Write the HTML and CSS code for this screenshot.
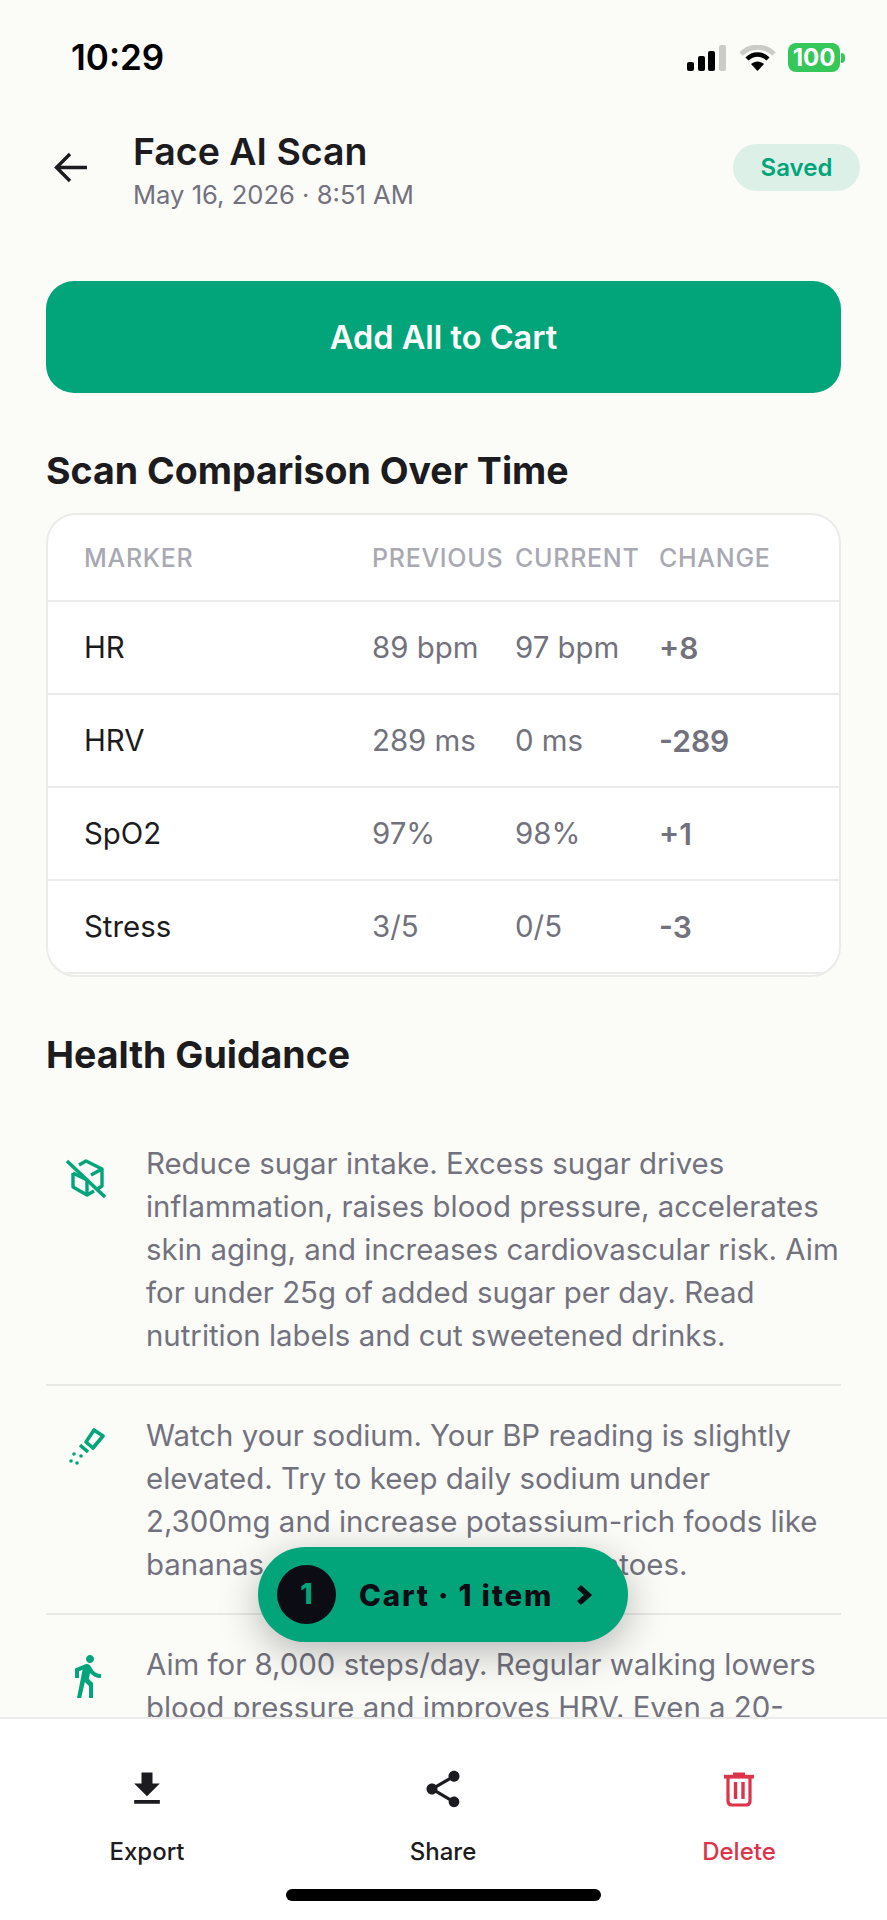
FILE: index.html
```html
<!DOCTYPE html>
<html>
<head>
    <title>Face AI Scan</title>
    <link rel="stylesheet" href="styles.css">
</head>
<body>
    <div class="screen">
        <div class="status_bar">
            <span class="time">10:29</span>
            <div class="status_icons">
                <svg class="signal" width="39" height="26" viewBox="0 0 39 26">
                    <rect x="0" y="17" width="7" height="9" rx="2" fill="#000"/>
                    <rect x="11" y="11" width="7" height="15" rx="2" fill="#000"/>
                    <rect x="21" y="6" width="7" height="20" rx="2" fill="#000"/>
                    <rect x="32" y="0" width="7" height="26" rx="2" fill="#cbccc8"/>
                </svg>
                <svg class="wifi" width="37" height="26" viewBox="0 0 37 26">
                    <path d="M2 9 C11 0 26 0 35 9" fill="none" stroke="#cbccc8" stroke-width="5"/>
                    <path d="M8 14 C14 8 23 8 29 14" fill="none" stroke="#000" stroke-width="4.5"/>
                    <path d="M12 19 L18.500 26 L25 19 C21 15.500 16 15.500 12 19 Z" fill="#000"/>
                </svg>
                <div class="battery"><span>100</span></div>
                <div class="battery_nub"></div>
            </div>
        </div>

        <div class="content">
            <div class="header">
                <svg class="back" width="34" height="31" viewBox="0 0 34 31">
                    <path d="M33 15.500 H3 M16 2 L2.500 15.500 L16 29" fill="none" stroke="#1b1b20" stroke-width="3.400"/>
                </svg>
                <div class="header_text">
                    <div class="title">Face AI Scan</div>
                    <div class="date">May 16, 2026 · 8:51 AM</div>
                </div>
                <span class="saved">Saved</span>
            </div>

            <button class="add_button">Add All to Cart</button>

            <h2 class="section_title">Scan Comparison Over Time</h2>
            <div class="compare_table">
                <div class="compare_row head">
                    <span>MARKER</span><span>PREVIOUS</span><span>CURRENT</span><span>CHANGE</span>
                </div>
                <div class="compare_row">
                    <span class="marker">HR</span><span>89 bpm</span><span>97 bpm</span><span class="change">+8</span>
                </div>
                <div class="compare_row">
                    <span class="marker">HRV</span><span>289 ms</span><span>0 ms</span><span class="change">-289</span>
                </div>
                <div class="compare_row">
                    <span class="marker">SpO2</span><span>97%</span><span>98%</span><span class="change">+1</span>
                </div>
                <div class="compare_row">
                    <span class="marker">Stress</span><span>3/5</span><span>0/5</span><span class="change">-3</span>
                </div>
            </div>

            <h2 class="section_title guidance_title">Health Guidance</h2>
            <div class="guidance">
                <div class="guide_item">
                    <div class="guide_icon">
                        <svg width="52" height="56" viewBox="0 0 52 56" fill="none" stroke="#02a57a" stroke-width="3.400" stroke-linejoin="round">
                            <path d="M19 15 L26 11 L42 19 V36 L36 40 M42 19 L31 25 M13 23 V37 L27 45 L34 41 M13 23 L27 30 V45"/>
                            <path d="M7 11 L45 47" stroke-width="3.600"/>
                        </svg>
                    </div>
                    <p>Reduce sugar intake. Excess sugar drives inflammation, raises blood pressure, accelerates skin aging, and increases cardiovascular risk. Aim for under 25g of added sugar per day. Read nutrition labels and cut sweetened drinks.</p>
                </div>
                <div class="guide_item">
                    <div class="guide_icon">
                        <svg width="52" height="50" viewBox="0 0 52 50" fill="none" stroke="#02a57a" stroke-width="3.600" stroke-linejoin="round">
                            <path d="M26 20 L34 8 L43 14 L33 26 Z"/>
                            <path d="M20 23 L28 30"/>
                            <g fill="#02a57a" stroke="none">
                                <circle cx="14" cy="32" r="1.800"/><circle cx="21" cy="34" r="1.800"/><circle cx="11" cy="39" r="1.800"/><circle cx="17" cy="41" r="1.800"/>
                            </g>
                        </svg>
                    </div>
                    <p>Watch your sodium. Your BP reading is slightly elevated. Try to keep daily sodium under 2,300mg and increase potassium-rich foods like bananas, spinach, and sweet potatoes.</p>
                </div>
                <div class="guide_item">
                    <div class="guide_icon walk">
                        <svg width="48" height="48" viewBox="0 0 24 24" fill="#02a57a">
                            <path d="M13.500 5.500c1.100 0 2-.9 2-2s-.9-2-2-2-2 .9-2 2 .9 2 2 2zM9.800 8.900L7 23h2.100l1.800-8 2.100 2v6h2v-7.500l-2.100-2 .6-3C14.800 12 16.800 13 19 13v-2c-1.900 0-3.500-1-4.300-2.400l-1-1.600c-.4-.6-1-1-1.700-1-.3 0-.5.1-.8.1L6 8.300V13h2V9.600l1.800-.7"/>
                        </svg>
                    </div>
                    <p>Aim for 8,000 steps/day. Regular walking lowers blood pressure and improves HRV. Even a 20-</p>
                </div>
            </div>
        </div>

        <div class="cart_pill">
            <span class="cart_count">1</span>
            <span class="cart_label">Cart · 1 item</span>
            <svg width="17" height="20" viewBox="0 0 17 20">
                <path d="M3 2 L12 10 L3 18" fill="none" stroke="#0b0c14" stroke-width="5.500"/>
            </svg>
        </div>

        <div class="bottom_bar">
            <div class="actions">
                <div class="action">
                    <svg width="44" height="44" viewBox="0 0 24 24" fill="#1b1b20">
                        <path d="M19 9h-4V3H9v6H5l7 7 7-7zM5 18v2h14v-2H5z"/>
                    </svg>
                    <span>Export</span>
                </div>
                <div class="action">
                    <svg width="44" height="44" viewBox="0 0 24 24" fill="#1b1b20">
                        <path d="M18 16.080c-.76 0-1.440.3-1.960.77L8.910 12.700c.05-.23.09-.46.09-.7s-.04-.47-.09-.7l7.050-4.110c.54.5 1.250.81 2.040.81 1.660 0 3-1.340 3-3s-1.340-3-3-3-3 1.340-3 3c0 .24.04.47.09.7L8.040 9.810C7.500 9.310 6.790 9 6 9c-1.660 0-3 1.340-3 3s1.340 3 3 3c.79 0 1.500-.31 2.040-.81l7.120 4.160c-.05.21-.08.43-.08.65 0 1.610 1.310 2.920 2.920 2.920 1.610 0 2.920-1.310 2.920-2.920s-1.310-2.920-2.920-2.920z"/>
                    </svg>
                    <span>Share</span>
                </div>
                <div class="action delete">
                    <svg width="44" height="44" viewBox="2 4 44 44" fill="none" stroke="#dc3449" stroke-width="3.200">
                        <path d="M9 13.700 H39" stroke-width="3.800"/>
                        <path d="M18 11 H30" stroke-width="3"/>
                        <path d="M13 15 V38 Q13 42 17 42 H31 Q35 42 35 38 V15"/>
                        <path d="M20.500 19 V36 M28 19 V36" stroke-width="3.400"/>
                    </svg>
                    <span>Delete</span>
                </div>
            </div>
            <div class="home_bar"></div>
        </div>
    </div>
</body>
</html>
```

FILE: styles.css
```css
* {
    box-sizing: border-box;
}
html, body {
    margin: 0;
    padding: 0;
}
body {
    font-family: Inter, "Liberation Sans", sans-serif;
    background-color: #fbfbf8;
}
.screen {
    position: relative;
    width: 887px;
    height: 1920px;
    display: flex;
    flex-direction: column;
    overflow: hidden;
}
.status_bar {
    height: 117px;
    flex-shrink: 0;
    padding: 37px 42px 0 71px;
    display: flex;
    justify-content: space-between;
    align-items: flex-start;
}
.time {
    font-size: 35px;
    line-height: 40px;
    font-weight: 600;
    color: #000;
}
.status_icons {
    display: flex;
    align-items: center;
    padding-top: 6px;
}
.signal {
    margin-right: 13px;
}
.wifi {
    margin-right: 12px;
}
.battery {
    width: 52px;
    height: 29px;
    border-radius: 8px;
    background-color: #35c759;
    color: #fff;
    font-size: 24px;
    font-weight: 700;
    line-height: 29px;
    text-align: center;
}
.battery_nub {
    width: 4px;
    height: 10px;
    margin-left: 1px;
    border-radius: 0 4px 4px 0;
    background-color: #35c759;
}
.content {
    flex: 1;
    min-height: 0;
    padding: 0 46px;
    overflow: hidden;
}
.header {
    display: flex;
    align-items: center;
    height: 100px;
}
.back {
    margin-left: 8px;
    margin-right: 45px;
    flex-shrink: 0;
}
.header_text {
    flex: 1;
    padding-top: 5px;
}
.title {
    font-size: 37.5px;
    line-height: 46px;
    font-weight: 600;
    color: #1b1b20;
}
.date {
    margin-top: 4px;
    font-size: 25.6px;
    line-height: 32px;
    color: #72727e;
}
.saved {
    width: 127px;
    height: 47px;
    margin-right: -19px;
    border-radius: 24px;
    background-color: #dcf0e8;
    color: #02a57a;
    font-size: 24px;
    font-weight: 600;
    line-height: 47px;
    text-align: center;
}
.add_button {
    display: block;
    width: 100%;
    height: 112px;
    margin-top: 64px;
    border: none;
    border-radius: 28px;
    background-color: #02a57a;
    color: #fff;
    font-family: inherit;
    font-size: 32.5px;
    font-weight: 600;
}
.section_title {
    margin: 56px 0 0;
    font-size: 37.5px;
    line-height: 44px;
    font-weight: 700;
    color: #1b1b20;
}
.compare_table {
    margin-top: 20px;
    height: 464px;
    border: 2px solid #ebebe9;
    border-radius: 30px;
    background-color: #fff;
    overflow: hidden;
}
.compare_row {
    display: grid;
    grid-template-columns: 288px 143px 144px 1fr;
    align-items: center;
    height: 93px;
    padding-left: 36px;
    border-bottom: 2px solid #ebebe9;
    font-size: 29.4px;
    color: #72727e;
}
.compare_row.head {
    height: 87px;
    font-size: 25px;
    font-weight: 500;
    letter-spacing: 0.7px;
    color: #a9a9b3;
}
.marker {
    color: #1b1b20;
}
.change {
    font-size: 30px;
    font-weight: 600;
}
.guidance_title {
    margin-top: 56px;
}
.guidance {
    margin-top: 37px;
}
.guide_item {
    display: flex;
    align-items: flex-start;
    border-bottom: 2px solid #e8e8e5;
    padding: 28px 0 27px;
}
.guide_icon {
    flex-shrink: 0;
    width: 80px;
    margin-right: 20px;
    margin-top: 8px;
    display: flex;
    justify-content: center;
}
.guide_icon.walk {
    margin-top: 9px;
    padding-left: 2px;
}
.guide_item p {
    margin: 0;
    font-size: 29.4px;
    line-height: 43px;
    color: #72727e;
}
.cart_pill {
    position: absolute;
    left: 258px;
    top: 1547px;
    width: 370px;
    height: 95px;
    display: flex;
    align-items: center;
    padding-left: 19px;
    border-radius: 48px;
    background-color: #02a57a;
    box-shadow: 0 10px 40px rgba(0, 0, 0, 0.28);
}
.cart_count {
    width: 59px;
    height: 59px;
    border-radius: 50%;
    background-color: #0b0c14;
    color: #02a57a;
    font-size: 28px;
    font-weight: 800;
    line-height: 59px;
    text-align: center;
}
.cart_label {
    margin: 0 23px 0 23px;
    font-size: 29.5px;
    font-weight: 800;
    letter-spacing: 1.8px;
    color: #0b0c14;
}
.bottom_bar {
    height: 203px;
    flex-shrink: 0;
    background-color: #fff;
    border-top: 2px solid #ebebe9;
}
.actions {
    display: grid;
    grid-template-columns: repeat(3, 296px);
    padding-top: 48px;
    margin-left: -1px;
}
.action {
    display: flex;
    flex-direction: column;
    align-items: center;
    font-size: 24px;
    font-weight: 500;
    color: #1b1b20;
}
.action span {
    margin-top: 26px;
}
.action.delete {
    color: #dc3449;
}
.home_bar {
    width: 315px;
    height: 12px;
    margin: 23px auto 0;
    border-radius: 6px;
    background-color: #000;
}
```
